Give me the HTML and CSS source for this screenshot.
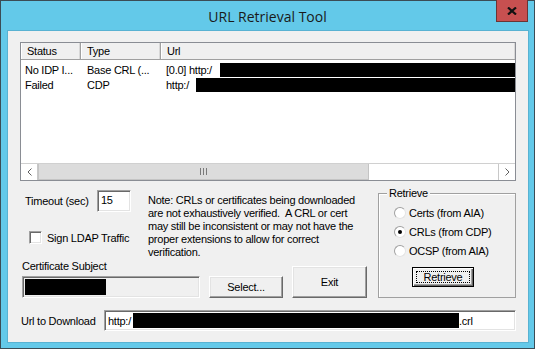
FILE: index.html
```html
<!DOCTYPE html>
<html lang="en">
<head>
    <meta charset="UTF-8">
    <title>URL Retrieval Tool</title>
    <link rel="stylesheet" href="styles.css">
</head>
<body>
<div class="window">
    <div class="titlebar">
        <span class="title">URL Retrieval Tool</span>
        <div class="close">
            <svg width="10" height="8" viewBox="0 0 10 8"><path d="M1 0.5 L9 7.5 M9 0.5 L1 7.5" stroke="#111" stroke-width="2.2" fill="none"/></svg>
        </div>
    </div>

    <div class="client">
        <!-- list of urls -->
        <div class="listview">
            <div class="lv-head">
                <div class="hcell c-status">Status</div>
                <div class="hcell c-type">Type</div>
                <div class="hcell c-url">Url</div>
            </div>
            <div class="lv-body">
                <div class="lv-row">
                    <span class="cell c-status">No IDP I...</span>
                    <span class="cell c-type">Base CRL (...</span>
                    <span class="cell c-url"><span class="pre1">[0.0] http:/</span><span class="redact"></span></span>
                </div>
                <div class="lv-row">
                    <span class="cell c-status">Failed</span>
                    <span class="cell c-type">CDP</span>
                    <span class="cell c-url"><span class="pre2">http:/</span><span class="redact"></span></span>
                </div>
            </div>
            <div class="hscroll">
                <div class="sb-btn sb-left">
                    <svg width="5" height="8" viewBox="0 0 5 8"><path d="M4.5 0.5 L1 4 L4.5 7.5" stroke="#606060" fill="none"/></svg>
                </div>
                <div class="sb-thumb">
                    <svg width="7" height="7" viewBox="0 0 7 7"><path d="M0.5 0 V7 M3.5 0 V7 M6.5 0 V7" stroke="#7a7a7a" fill="none"/></svg>
                </div>
                <div class="sb-track"></div>
                <div class="sb-btn sb-right">
                    <svg width="5" height="8" viewBox="0 0 5 8"><path d="M0.5 0.5 L4 4 L0.5 7.5" stroke="#606060" fill="none"/></svg>
                </div>
            </div>
        </div>

        <div class="middle">
            <div class="left">
                <div class="top">
                    <div class="controls">
                        <div class="timeout-row">
                            <span class="timeout-label">Timeout (sec)</span>
                            <div class="textbox timeout-box">15</div>
                        </div>
                        <div class="check-row">
                            <span class="checkbox"></span>
                            <span class="check-label">Sign LDAP Traffic</span>
                        </div>
                    </div>
                    <div class="note">
                        Note: CRLs or certificates being downloaded<br>
                        are not exhaustively verified.&nbsp; A CRL or cert<br>
                        may still be inconsistent or may not have the<br>
                        proper extensions to allow for correct<br>
                        verification.
                    </div>
                </div>
                <div class="bottom">
                    <div class="subject">
                        <div class="subject-label">Certificate Subject</div>
                        <div class="textbox subject-box"><span class="redact-sub"></span></div>
                    </div>
                    <div class="button select-btn">Select...</div>
                    <div class="button exit-btn">Exit</div>
                </div>
            </div>

            <fieldset class="retrieve">
                <legend>Retrieve</legend>
                <div class="retrieve-inner">
                    <div class="radio-row"><span class="radio"></span><span class="radio-label">Certs (from AIA)</span></div>
                    <div class="radio-row"><span class="radio checked"></span><span class="radio-label">CRLs (from CDP)</span></div>
                    <div class="radio-row"><span class="radio"></span><span class="radio-label">OCSP (from AIA)</span></div>
                    <div class="button default-btn"><span class="focus">Retrieve</span></div>
                </div>
            </fieldset>
        </div>

        <div class="url-row">
            <span class="url-label">Url to Download</span>
            <div class="textbox url-box"><span>http:/</span><span class="redact-url"></span><span>.crl</span></div>
        </div>
    </div>
</div>
</body>
</html>
```

FILE: styles.css
```css
*{
    margin: 0;
    padding: 0;
    box-sizing: border-box;
}
body{
    width: 535px;
    height: 349px;
    overflow: hidden;
    font-family: "Liberation Sans", Arial, sans-serif;
    font-size: 11px;
    letter-spacing: -0.25px;
    color: #000;
}
.window{
    width: 535px;
    height: 349px;
    border: 1px solid #3b4c55;
    background-color: #63c9e9;
}
.titlebar{
    height: 29px;
    position: relative;
    display: flex;
    justify-content: center;
    align-items: center;
}
.title{
    font-family: "Open Sans", "Noto Sans", sans-serif;
    font-size: 14px;
    letter-spacing: 0;
    color: #1a1a1a;
    padding-top: 1px;
}
.close{
    position: absolute;
    right: 6px;
    top: -1px;
    width: 32px;
    height: 22px;
    background-color: #c75050;
    border: 1px solid #6b3434;
    border-top: none;
    display: flex;
    justify-content: center;
    align-items: center;
}

/*client area*/
.client{
    width: 522px;
    height: 313px;
    margin-left: 6px;
    border: 1px solid #58b2d2;
    background-color: #f0f0f0;
    padding: 11px 12px 0 12px;
}
.listview{
    height: 139px;
    border: 1px solid #8a8d94;
    background-color: #fff;
    display: flex;
    flex-direction: column;
}
.lv-head{
    height: 17px;
    display: flex;
    background-color: #f0f0f0;
    border-bottom: 1px solid #a0a0a0;
}
.hcell{
    line-height: 16px;
    padding-left: 6px;
    border-right: 1px solid #a0a0a0;
    box-shadow: inset -1px 0 #d8d8d8, inset 1px 0 #fff;
}
.c-status{
    width: 60px;
}
.c-type{
    width: 80px;
}
.c-url{
    flex: 1;
}
.lv-head .c-url{
    border-right: none;
}
.lv-body{
    flex: 1;
    padding-top: 2px;
}
.lv-row{
    height: 15px;
    display: flex;
    align-items: center;
}
.lv-row .cell{
    padding-left: 6px;
    white-space: nowrap;
}
.lv-row .c-status{
    padding-left: 4px;
}
.lv-row .c-type{
    padding-left: 6px;
}
.lv-row .c-url{
    padding-left: 5px;
    display: flex;
    align-items: center;
}
.pre1{
    width: 54px;
}
.pre2{
    width: 30px;
}
.redact{
    flex: 1;
    height: 14px;
    background-color: #000;
}
.hscroll{
    height: 17px;
    display: flex;
    border-top: 1px solid #d0d0d0;
}
.sb-btn{
    width: 17px;
    display: flex;
    justify-content: center;
    align-items: center;
    background-color: #fff;
}
.sb-left{
    border-right: 1px solid #c8c8c8;
}
.sb-right{
    border-left: 1px solid #c8c8c8;
}
.sb-thumb{
    width: 331px;
    background-color: #dcdcdc;
    border: 1px solid #c4c4c4;
    border-top: none;
    display: flex;
    justify-content: center;
    align-items: center;
}
.sb-track{
    flex: 1;
    background-color: #fff;
}

/*controls*/
.middle{
    display: flex;
    padding-top: 6px;
}
.left{
    flex: 1;
    padding-top: 3px;
    display: flex;
    flex-direction: column;
}
.top{
    display: flex;
}
.controls{
    width: 128px;
}
.timeout-row{
    height: 22px;
    display: flex;
    align-items: center;
    padding-left: 5px;
}
.timeout-label{
    width: 72px;
}
.textbox{
    background-color: #fff;
    border: 1px solid;
    border-color: #a0a0a0 #fff #fff #a0a0a0;
    box-shadow: inset 1px 1px #696969, inset -1px -1px #e3e3e3;
}
.timeout-box{
    width: 34px;
    height: 22px;
    padding: 2px 0 0 3px;
    line-height: 14px;
}
.check-row{
    margin-top: 19px;
    height: 13px;
    display: flex;
    align-items: center;
    padding-left: 9px;
}
.checkbox{
    width: 13px;
    height: 13px;
    background-color: #fff;
    border: 1px solid;
    border-color: #a0a0a0 #fff #fff #a0a0a0;
    box-shadow: inset 1px 1px #696969, inset -1px -1px #e3e3e3;
}
.check-label{
    margin-left: 5px;
}
.note{
    margin-top: 4px;
    line-height: 13px;
    white-space: nowrap;
}
.bottom{
    display: flex;
    align-items: flex-end;
    padding-left: 2px;
}
.subject{
    width: 178px;
}
.subject-label{
    line-height: 13px;
    margin-top: 1px;
}
.subject-box{
    margin-top: 3px;
    height: 22px;
    background-color: #f0f0f0;
    padding: 2px;
}
.redact-sub{
    display: block;
    width: 81px;
    height: 16px;
    background-color: #000;
}
.button{
    background-color: #f0f0f0;
    border: 1px solid;
    border-color: #fff #696969 #696969 #fff;
    box-shadow: inset -1px -1px #a0a0a0, inset 1px 1px #e3e3e3;
    display: flex;
    justify-content: center;
    align-items: center;
}
.select-btn{
    margin-left: 9px;
    width: 74px;
    height: 22px;
}
.exit-btn{
    margin-left: 9px;
    width: 75px;
    height: 32px;
}

/*retrieve group*/
.retrieve{
    width: 138px;
    min-width: 0;
    height: 111px;
    border: 1px solid #a0a0a0;
    box-shadow: inset 1px 1px #fff;
    padding: 0;
}
.retrieve legend{
    margin-left: 8px;
    padding: 0 2px;
    line-height: 13px;
    background-color: #f0f0f0;
}
.retrieve-inner{
    padding: 3px 0 0 15px;
}
.radio-row{
    height: 19px;
    display: flex;
    align-items: center;
}
.radio{
    width: 12px;
    height: 12px;
    border-radius: 50%;
    background-color: #fff;
    border: 1px solid;
    border-color: #a0a0a0 #e3e3e3 #e3e3e3 #a0a0a0;
    display: flex;
    justify-content: center;
    align-items: center;
}
.radio.checked::after{
    content: "";
    width: 4px;
    height: 4px;
    border-radius: 50%;
    background-color: #000;
}
.radio-label{
    margin-left: 3px;
}
.default-btn{
    margin: 7px 0 0 18px;
    width: 62px;
    height: 20px;
    border: 1px solid #000;
    box-shadow: inset 1px 1px #fff, inset -1px -1px #696969, inset -2px -2px #a0a0a0;
    padding: 3px;
}
.focus{
    width: 100%;
    height: 100%;
    border: 1px dotted #000;
    display: flex;
    justify-content: center;
    align-items: center;
}

/*url*/
.url-row{
    margin-top: 12px;
    display: flex;
    align-items: center;
    padding-left: 1px;
}
.url-label{
    width: 83px;
}
.url-box{
    flex: 1;
    height: 21px;
    display: flex;
    align-items: center;
    padding-left: 3px;
    white-space: nowrap;
}
.url-box span:first-child{
    width: 25px;
}
.redact-url{
    width: 326px;
    height: 15px;
    background-color: #000;
}
```
